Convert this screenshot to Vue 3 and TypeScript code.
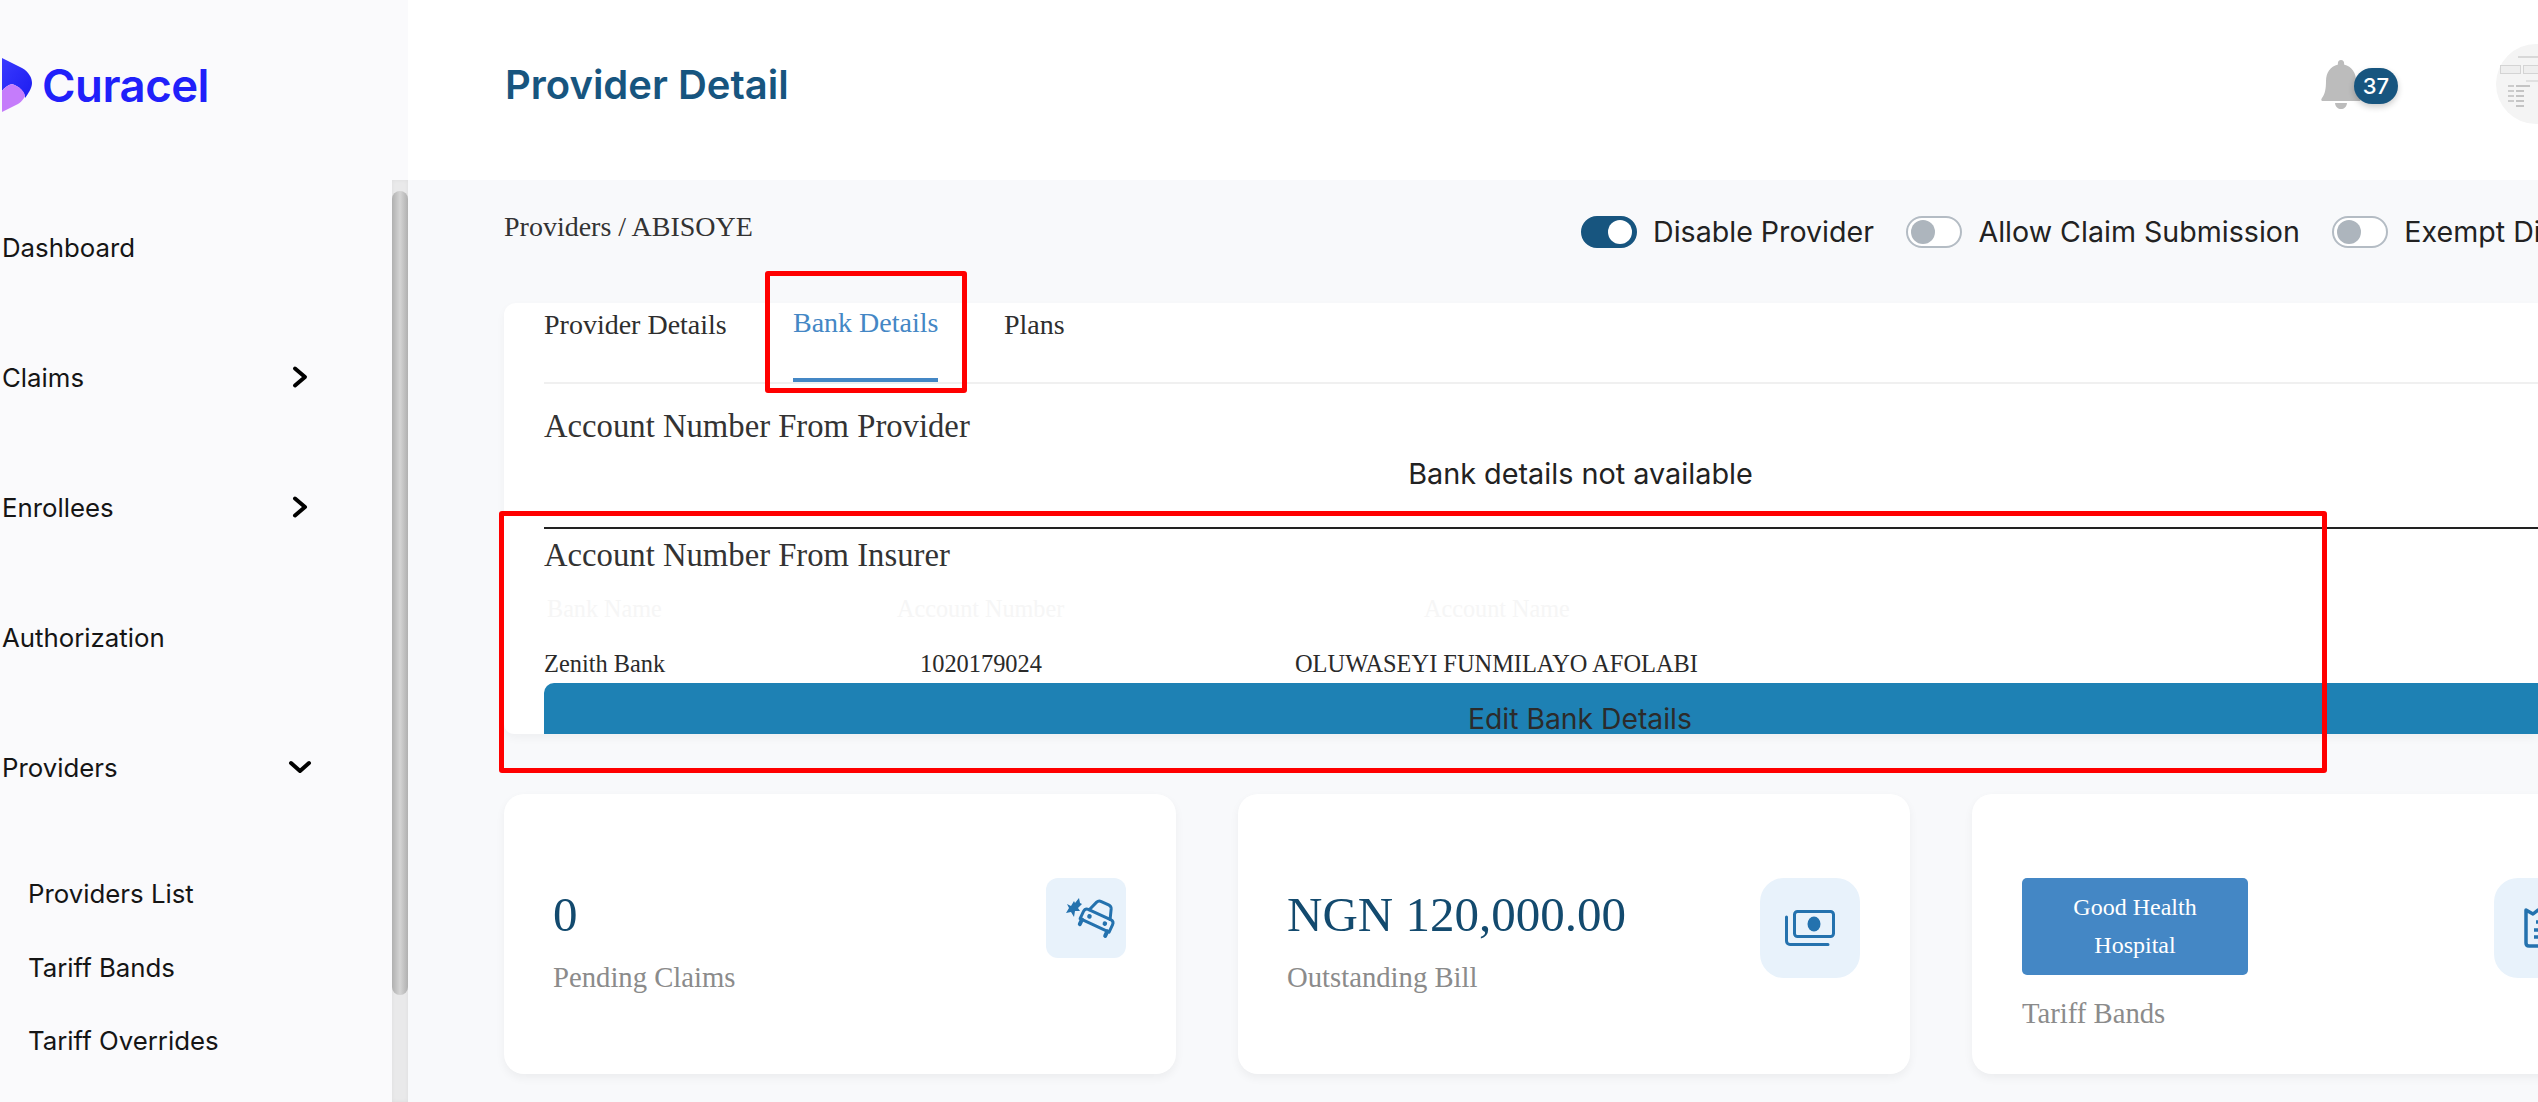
<script setup lang="ts">
const nav = [
  { label: 'Dashboard', icon: '' },
  { label: 'Claims', icon: 'right' },
  { label: 'Enrollees', icon: 'right' },
  { label: 'Authorization', icon: '' },
  { label: 'Providers', icon: 'down' },
]
const sub = ['Providers List', 'Tariff Bands', 'Tariff Overrides']
const toggles = [
  { label: 'Disable Provider', on: true },
  { label: 'Allow Claim Submission', on: false },
  { label: 'Exempt Discount', on: false },
]
</script>

<template>
  <div class="page">
    <aside class="side">
      <div class="logo">
        <svg class="logo-mark" width="34" height="55" viewBox="0 0 34 55">
          <defs>
            <linearGradient id="bl" x1="0" y1="0" x2="1" y2="1">
              <stop offset="0" stop-color="#3a3aff" />
              <stop offset="1" stop-color="#1c1cf0" />
            </linearGradient>
          </defs>
          <path d="M2 0 L22 10 C29 14 32 20 32 25 C32 30 28 36 25 40 C25 34 19 28 12 26 C8 27 4 30 2 33 Z" fill="url(#bl)" />
          <path d="M2 54 L2 33 C4 30 8 27 12 26 C19 28 25 34 25 38 L24 40 C22 43 20 45 18 46 Z" fill="#c57cfb" />
        </svg>
        <span class="logo-text">Curacel</span>
      </div>
      <div class="side-scroll">
        <nav class="nav">
          <div v-for="n in nav" :key="n.label" class="nav-item">
            <span>{{ n.label }}</span>
            <svg v-if="n.icon === 'right'" class="chev" width="24" height="24" viewBox="0 0 24 24"><path d="M7 3.500 L17 12 L7 20.500" fill="none" stroke="#000" stroke-width="4" stroke-linejoin="round" stroke-linecap="round" /></svg>
            <svg v-if="n.icon === 'down'" class="chev" width="24" height="24" viewBox="0 0 24 24"><path d="M3 8 L12 16 L21 8" fill="none" stroke="#000" stroke-width="4" stroke-linejoin="round" stroke-linecap="round" /></svg>
          </div>
          <div class="sub">
            <div v-for="s in sub" :key="s" class="sub-item">{{ s }}</div>
          </div>
        </nav>
        <div class="track"><div class="thumb"></div></div>
      </div>
    </aside>

    <main class="main">
      <header class="top">
        <h1 class="title">Provider Detail</h1>
        <div class="top-right">
          <div class="bell-wrap">
            <svg class="bell" width="40" height="50" viewBox="0 0 40 50">
              <path d="M20 0 C22.500 0 23.500 2 23 4.500 C31 6.500 35 13 35 21 C35 29 36 34 39 38 C40.500 40 39.500 41 38 41 L2 41 C0.500 41 -0.500 40 1 38 C4 34 5 29 5 21 C5 13 9 6.500 17 4.500 C16.500 2 17.500 0 20 0 Z" fill="#bcbcbc" />
              <path d="M14 43 L26 43 C25.500 47 23 49 20 49 C17 49 14.500 47 14 43 Z" fill="#bcbcbc" />
            </svg>
            <span class="badge">37</span>
          </div>
          <div class="avatar">
            <svg width="80" height="80" viewBox="0 0 80 80">
              <circle cx="40" cy="40" r="40" fill="#f4f4f4" />
              <rect x="22" y="12" width="24" height="2" fill="#d8d8d8" />
              <rect x="4.500" y="21.500" width="20" height="8" fill="#eee" stroke="#d4d4d4" />
              <rect x="27.500" y="21.500" width="30" height="8" fill="#eee" stroke="#d4d4d4" />
              <rect x="30" y="36" width="40" height="2" fill="#e0e0e0" />
              <rect x="12" y="41" width="6" height="2" fill="#ccc" />
              <rect x="12" y="46" width="6" height="2" fill="#ccc" />
              <rect x="12" y="51" width="6" height="2" fill="#ccc" />
              <rect x="12" y="56" width="6" height="2" fill="#ccc" />
              <rect x="20" y="41" width="14" height="2" fill="#c4c4c4" />
              <rect x="20" y="46" width="8" height="2" fill="#c4c4c4" />
              <rect x="20" y="51" width="8" height="2" fill="#c4c4c4" />
              <rect x="20" y="56" width="8" height="2" fill="#c4c4c4" />
              <rect x="20" y="61" width="8" height="2" fill="#c4c4c4" />
            </svg>
          </div>
        </div>
      </header>

      <div class="content">
        <div class="crumb-row">
          <div class="crumb">Providers / ABISOYE</div>
          <div class="toggles">
            <label v-for="t in toggles" :key="t.label" class="toggle">
              <span class="switch" :class="{ on: t.on }"><span class="knob"></span></span>
              <span class="toggle-text">{{ t.label }}</span>
            </label>
          </div>
        </div>

        <section class="panel">
          <div class="tabs">
            <div class="tab tab-a">Provider Details</div>
            <div class="tab tab-b active">Bank Details</div>
            <div class="tab tab-c">Plans</div>
          </div>
          <h2 class="acct acct-1">Account Number From Provider</h2>
          <div class="empty">Bank details not available</div>
          <div class="rule"></div>
          <h2 class="acct acct-2">Account Number From Insurer</h2>
          <div class="row head">
            <span class="c1">Bank Name</span>
            <span class="c2">Account Number</span>
            <span class="c3">Account Name</span>
          </div>
          <div class="row body-row">
            <span class="b1">Zenith Bank</span>
            <span class="b2">1020179024</span>
            <span class="b3">OLUWASEYI FUNMILAYO AFOLABI</span>
          </div>
          <button class="edit" type="button"><span>Edit Bank Details</span></button>
        </section>

        <div class="stats">
          <div class="stat">
            <div class="stat-text">
              <div class="value">0</div>
              <div class="label">Pending Claims</div>
            </div>
            <div class="ico ico-small">
              <svg class="car" width="60" height="50" viewBox="0 0 60 50">
                <g transform="translate(28.500 35) rotate(25)" fill="none" stroke="#2472ae" stroke-width="3" stroke-linejoin="round" stroke-linecap="round">
                  <path d="M-11.500 -17 L-8 -27 Q-7 -29.500 -4 -29.500 L4 -29.500 Q7 -29.500 8 -27 L11.500 -17" />
                  <path d="M-16 -5 L-16 -13 Q-16 -17 -12 -17 L12 -17 Q16 -17 16 -13 L16 -5 Z" />
                  <path d="M-14 -5 V0 M14 -5 V0" stroke-width="4" />
                  <circle cx="-8.500" cy="-11" r="2.300" fill="#2472ae" stroke="none" />
                  <circle cx="8.500" cy="-11" r="2.300" fill="#2472ae" stroke="none" />
                </g>
                <path d="M3 9 L7 11 L10 6 L11 8 L15 3 L16 8 L18 9 L14 13 L16 16 L11 16 L10 22 L7 17 L2 18 L5 13 Z" fill="#2472ae" />
              </svg>
            </div>
          </div>
          <div class="stat">
            <div class="stat-text">
              <div class="value">NGN 120,000.00</div>
              <div class="label">Outstanding Bill</div>
            </div>
            <div class="ico ico-big">
              <svg width="50" height="36" viewBox="0 0 50 36">
                <rect x="9.500" y="1.500" width="39" height="25" rx="3" fill="none" stroke="#2472ae" stroke-width="3" />
                <ellipse cx="29" cy="14" rx="6.500" ry="7.500" fill="#2472ae" />
                <path d="M1.500 7 L1.500 31 C1.500 33 3 34.500 5 34.500 L43 34.500" fill="none" stroke="#2472ae" stroke-width="3" stroke-linecap="round" />
              </svg>
            </div>
          </div>
          <div class="stat stat-last">
            <div class="stat-text">
              <div class="pill">Good Health<br />Hospital</div>
              <div class="label label-pill">Tariff Bands</div>
            </div>
            <div class="ico ico-big">
              <svg width="40" height="40" viewBox="0 0 40 40">
                <path d="M2 2 L9 6 L14 2 L20 6 L26 2 L31 6 L38 2 L38 35 C38 37 37 38 35 38 L5 38 C3 38 2 37 2 35 Z" fill="none" stroke="#2472ae" stroke-width="3.500" stroke-linejoin="round" />
                <path d="M12 14 L28 14 M10 22 L30 22 M10 29 L30 29" fill="none" stroke="#2472ae" stroke-width="3.500" />
              </svg>
            </div>
          </div>
        </div>
      </div>
    </main>

    <div class="mark mark-tab"></div>
    <div class="mark mark-insurer"></div>
  </div>
</template>

<style>
html, body { margin: 0; padding: 0; overflow: hidden; background: #f8f9fb; }
</style>

<style scoped>
.page {
  position: relative;
  display: flex;
  width: 2538px;
  height: 1102px;
  overflow: hidden;
  font-family: Inter, "Liberation Sans", sans-serif;
  background: #f8f9fb;
}
.side {
  flex: 0 0 408px;
  background: #fafafc;
  display: flex;
  flex-direction: column;
}
.logo {
  height: 180px;
  flex: none;
  display: flex;
  align-items: center;
  box-sizing: border-box;
  padding: 0 0 10px 0;
  gap: 8px;
}
.logo-mark { flex: none; margin-top: 1px; }
.logo-text {
  font-size: 45.500px;
  font-weight: 600;
  color: #2020fa;
  letter-spacing: -0.5px;
}
.side-scroll { flex: 1; display: flex; min-height: 0; }
.nav { flex: 1; padding-left: 2px; }
.nav-item {
  height: 130px;
  box-sizing: border-box;
  display: flex;
  align-items: center;
  justify-content: space-between;
  padding-right: 80px;
  font-size: 25.800px;
  color: #151515;
  position: relative;
  top: 2px;
}
.chev { flex: none; }
.sub { padding: 0 0 0 26px; margin-top: 27px; }
.sub-item {
  height: 73.500px;
  display: flex;
  align-items: center;
  font-size: 25.800px;
  color: #151515;
}
.track {
  flex: 0 0 16px;
  background: #e9e9ea;
  box-shadow: inset 0 0 4px rgba(0,0,0,0.05);
  position: relative;
  padding-top: 11px;
}
.thumb {
  height: 804px;
  border-radius: 8px;
  background: linear-gradient(90deg, #b0b0b0, #d4d4d4 50%, #b0b0b0);
}
.main { flex: 1; min-width: 0; display: flex; flex-direction: column; }
.top {
  height: 180px;
  flex: none;
  background: #fff;
  display: flex;
  align-items: center;
  justify-content: space-between;
  padding: 0 0 12px 97px;
  box-sizing: border-box;
}
.title {
  margin: 0;
  font-size: 40px;
  font-weight: 600;
  color: #17557f;
}
.top-right { display: flex; align-items: center; width: 218px; flex: none; }
.bell-wrap { position: relative; width: 40px; height: 50px; margin: 0 135px 0 1px; flex: none; top: 1px; }
.bell { display: block; }
.badge {
  position: absolute;
  left: 33px;
  top: 8px;
  width: 44px;
  height: 36px;
  border-radius: 18px;
  background: #17557f;
  color: #fff;
  font-size: 22px;
  font-weight: 500;
  text-align: center;
  line-height: 36px;
  box-shadow: 0 3px 6px rgba(0,0,0,0.2);
}
.avatar { width: 80px; height: 80px; flex: none; }
.avatar svg { display: block; }
.content { padding: 0 0 0 96px; flex: 1; min-width: 0; }
.crumb-row { position: relative; height: 123px; }
.crumb {
  position: absolute;
  left: 0;
  top: 31px;
  font-family: "Liberation Serif", serif;
  font-size: 28px;
  color: #333;
  white-space: nowrap;
}
.toggles {
  display: flex;
  gap: 32.500px;
  position: absolute;
  left: 1077px;
  top: 34px;
  white-space: nowrap;
}
.toggle { display: flex; align-items: center; gap: 16px; }
.toggle-text { font-size: 28.600px; color: #222; }
.switch {
  width: 56px;
  height: 32px;
  box-sizing: border-box;
  border-radius: 16px;
  border: 2px solid #b4bcc4;
  background: #fff;
  display: flex;
  align-items: center;
  padding: 0 3px;
  flex: none;
}
.switch .knob { width: 24px; height: 24px; border-radius: 50%; background: #adb5bd; }
.switch.on { background: #17557f; border-color: #17557f; justify-content: flex-end; }
.switch.on .knob { background: #fff; }
.panel {
  position: relative;
  height: 431px;
  background: #fff;
  border-radius: 12px 0 0 10px;
  box-shadow: 0 4px 10px rgba(0,0,0,0.04);
  overflow: hidden;
  padding-left: 40px;
  font-family: "Liberation Serif", serif;
  color: #333;
}
.tabs {
  position: relative;
  height: 79px;
  border-bottom: 2px solid #f0f0f0;
  font-size: 28px;
}
.tab { position: absolute; white-space: nowrap; top: 4px; line-height: 36px; color: #2e2e2e; }
.tab-a { left: 0; }
.tab-b { left: 249px; top: 2px; width: 145px; height: 73px; }
.tab-c { left: 460px; }
.tab.active { color: #4487c5; border-bottom: 4px solid #4487c5; }
.acct { margin: 0; font-weight: 400; font-size: 32.700px; color: #333; line-height: 40px; white-space: nowrap; }
.acct-1 { padding-top: 22px; }
.empty {
  text-align: center;
  font-family: Inter, sans-serif;
  font-size: 28.800px;
  color: #222;
  line-height: 36px;
  padding-top: 10px;
  width: 2073px;
}
.rule { height: 2px; background: #222; margin-top: 35px; }
.acct-2 { padding-top: 6px; }
.row { position: relative; height: 36px; font-size: 24.400px; line-height: 36px; white-space: nowrap; }
.row span { position: absolute; top: 0; }
.head { margin-top: 16px; color: #f6f6f6; font-size: 24.200px; }
.c1 { left: 3px; }
.c2 { left: 353px; }
.c3 { left: 880px; }
.body-row { margin-top: 19px; color: #2a2a2a; }
.b1 { left: 0; }
.b2 { left: 376px; }
.b3 { left: 751px; }
.edit {
  display: block;
  width: 100%;
  height: 60px;
  margin-top: 1px;
  border: 0;
  border-radius: 10px 0 0 0;
  background: #1e81b4;
  color: #2b2b2b;
  font-family: Inter, sans-serif;
  font-size: 28.300px;
  text-align: left;
  padding: 12px 0 0 924px;
}
.stats { display: flex; gap: 62px; margin-top: 60px; }
.stat {
  flex: 0 0 672px;
  height: 280px;
  box-sizing: border-box;
  background: #fff;
  border-radius: 20px;
  box-shadow: 0 4px 10px rgba(0,0,0,0.05);
  display: flex;
  justify-content: space-between;
  padding: 84px 50px 0 49px;
  font-family: "Liberation Serif", serif;
}
.stat-last { padding-left: 50px; }
.value { font-size: 49px; color: #134a6e; line-height: 56px; white-space: nowrap; padding-top: 9px; }
.label { font-size: 28.700px; color: #8b8b8b; line-height: 36px; margin-top: 16px; white-space: nowrap; }
.pill {
  width: 226px;
  height: 97px;
  box-sizing: border-box;
  background: #4487c5;
  border-radius: 5px;
  color: #fff;
  font-size: 24px;
  line-height: 38px;
  text-align: center;
  padding-top: 10px;
}
.label-pill { margin-top: 20px; }
.ico {
  background: #e8f2fb;
  display: flex;
  align-items: center;
  justify-content: center;
  flex: none;
}
.ico-small { width: 80px; height: 80px; border-radius: 12px; }
.ico-big { width: 100px; height: 100px; border-radius: 24px; }
.car { flex: none; margin: 4px -8px 0 8px; }
.mark {
  position: absolute;
  border: 5px solid #ff0000;
  border-radius: 3px;
  box-sizing: border-box;
  pointer-events: none;
}
.mark-tab { left: 765px; top: 271px; width: 202px; height: 122px; }
.mark-insurer { left: 499px; top: 511px; width: 1828px; height: 262px; }
</style>
